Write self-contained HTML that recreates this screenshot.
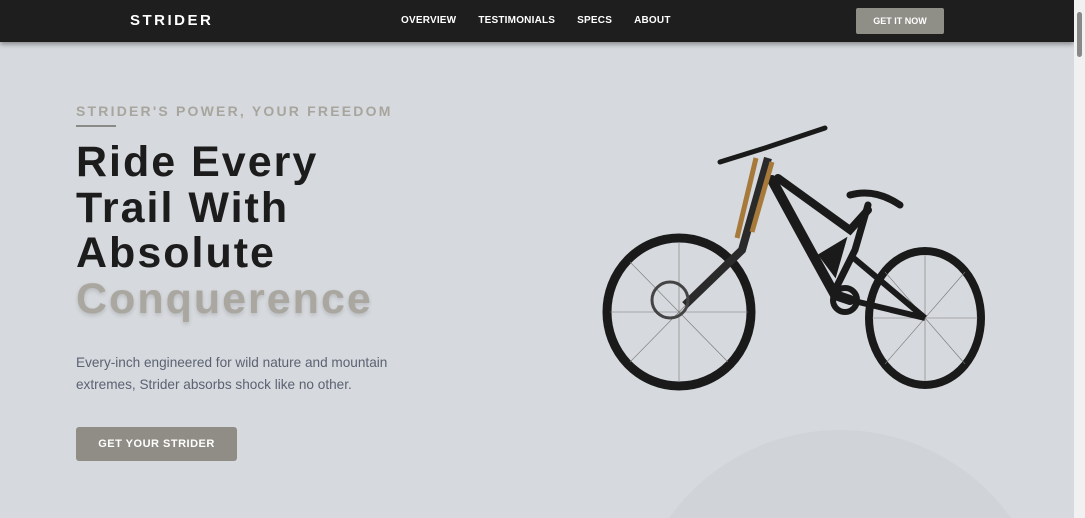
<!DOCTYPE html>
<html><head><style>
*{margin:0;padding:0;box-sizing:border-box}
html,body{width:1085px;height:518px;overflow:hidden}
body{background:#d6d9dd;font-family:"Liberation Sans",Arial,sans-serif;position:relative}
nav{position:absolute;left:0;top:0;width:1074px;height:42px;background:#1e1e1e;box-shadow:0 2px 5px rgba(0,0,0,.4);z-index:2}
.logo{position:absolute;left:130px;top:12px;color:#fff;font-weight:bold;font-size:15px;letter-spacing:2.5px}
.links{position:absolute;left:401px;top:15px;color:#fff;font-weight:bold;font-size:10px;letter-spacing:.2px;white-space:nowrap}
.links span{margin-right:22px}
.nb{position:absolute;left:856px;top:8px;width:88px;height:26px;background:#8f8e87;color:#fff;font-size:9px;font-weight:bold;text-align:center;line-height:26px;border-radius:2px}
.scroll{position:absolute;right:0;top:0;width:11px;height:518px;background:#f1f1f1;z-index:3}
.scroll div{position:absolute;left:3px;top:12px;width:5px;height:45px;background:#888;border-radius:3px}
.tag{position:absolute;left:76px;top:103px;color:#a7a59e;font-weight:bold;font-size:14px;letter-spacing:2.2px;white-space:nowrap}
.ul{position:absolute;left:76px;top:125px;width:40px;height:2px;background:#8a8a86}
h1{position:absolute;left:76px;top:140px;font-size:43px;line-height:45.5px;color:#1c1c1c;font-weight:900;letter-spacing:2px;white-space:nowrap}
h1 .c{color:#a9a7a0;text-shadow:0 2px 4px rgba(0,0,0,.15)}
p{position:absolute;left:76px;top:352px;font-size:13.6px;line-height:22px;color:#5b6272;white-space:nowrap}
.btn{position:absolute;left:76px;top:427px;width:161px;height:34px;background:#8f8d85;border-radius:3px;color:#fff;font-weight:bold;font-size:11px;text-align:center;line-height:34px;letter-spacing:.5px}
.wrap{position:absolute;left:0;top:0;width:1085px;height:518px;overflow:hidden}
.arc{position:absolute;left:630px;top:430px;width:420px;height:420px;border-radius:50%;background:#d0d3d8}
</style></head><body>
<div class="wrap"><div class="arc"></div></div>
<nav><div class="logo">STRIDER</div>
<div class="links"><span>OVERVIEW</span><span>TESTIMONIALS</span><span>SPECS</span><span>ABOUT</span></div>
<div class="nb">GET IT NOW</div></nav>
<div class="tag">STRIDER'S POWER, YOUR FREEDOM</div>
<div class="ul"></div>
<h1>Ride Every<br>Trail With<br>Absolute<br><span class="c">Conquerence</span></h1>
<p>Every-inch engineered for wild nature and mountain<br>extremes, Strider absorbs shock like no other.</p>
<div class="btn">GET YOUR STRIDER</div>
<svg style="position:absolute;left:0;top:0" width="1085" height="518">
<g fill="none" stroke="#1a1a1a">
<ellipse cx="679" cy="312" rx="72" ry="74" stroke-width="9"/>
<ellipse cx="925" cy="318" rx="56" ry="67" stroke-width="8"/>
<g stroke="#777" stroke-width=".6">
<line x1="610" y1="312" x2="748" y2="312"/><line x1="679" y1="242" x2="679" y2="382"/>
<line x1="630" y1="262" x2="728" y2="362"/><line x1="630" y1="362" x2="728" y2="262"/>
<line x1="872" y1="318" x2="978" y2="318"/><line x1="925" y1="255" x2="925" y2="381"/>
<line x1="885" y1="272" x2="965" y2="364"/><line x1="885" y1="364" x2="965" y2="272"/>
</g>
<path d="M772 180 Q810 250 835 295 L850 300" stroke-width="10" stroke-linecap="round"/>
<path d="M778 178 L850 230 L868 210" stroke-width="8" stroke-linecap="round"/>
<path d="M868 205 L855 250 L835 290" stroke-width="7" stroke-linecap="round"/>
<path d="M850 195 Q875 188 900 205" stroke-width="7" stroke-linecap="round"/>
<path d="M850 300 L925 318 M850 255 L925 318" stroke-width="6"/>
<path d="M720 162 L765 148 L825 128" stroke-width="5" stroke-linecap="round"/>
<path d="M768 158 L742 250 L685 305" stroke="#2a2a2a" stroke-width="8"/>
<path d="M772 162 L752 232 M756 158 L737 238" stroke="#a7793a" stroke-width="5"/>
<circle cx="670" cy="300" r="18" stroke="#444" stroke-width="3"/>
<circle cx="845" cy="300" r="12" stroke-width="6"/>
<path d="M820 255 L845 240 L835 275 Z" fill="#1a1a1a" stroke-width="3"/>
</g>
</svg>
<div class="scroll"><div></div></div>
</body></html>
